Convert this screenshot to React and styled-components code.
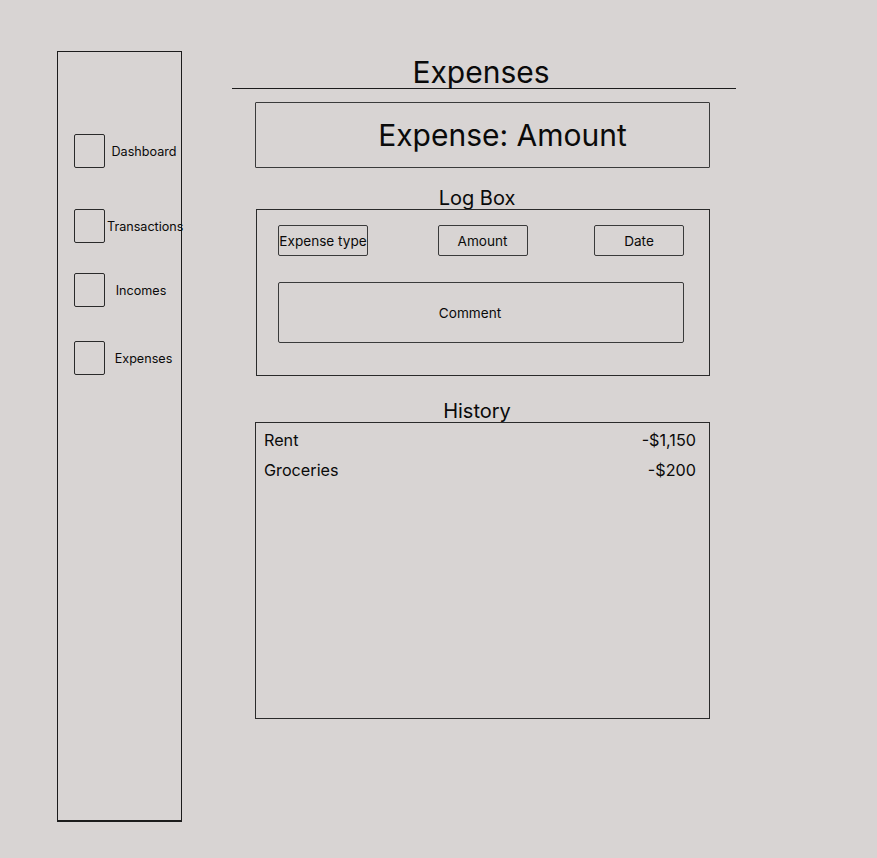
import styled, { createGlobalStyle } from 'styled-components'

const GlobalStyle = createGlobalStyle`
  html, body {
    margin: 0;
    padding: 0;
    background: #d8d4d3;
  }
  body {
    font-family: Inter, "Noto Sans", "Liberation Sans", sans-serif;
    color: #0a0a0a;
  }
`

const Page = styled.div`
  display: flex;
  align-items: flex-start;
  min-height: 858px;
  padding: 51px 0 0 57px;
  box-sizing: border-box;
`

const Sidebar = styled.nav`
  width: 125px;
  height: 771px;
  border: 1.5px solid #1c1c1c;
  border-bottom-width: 2px;
  box-sizing: border-box;
  padding-top: 82px;
  display: flex;
  flex-direction: column;
`

const NavItem = styled.div`
  display: flex;
  align-items: center;
  margin-top: ${p => p.gap || 0}px;
  padding-left: 16px;
`

const NavIcon = styled.div`
  width: 31px;
  height: 34px;
  flex-shrink: 0;
  border: 1.5px solid #2a2a2a;
  border-radius: 2px;
  box-sizing: border-box;
`

const NavLabel = styled.span`
  flex: 1;
  text-align: center;
  font-size: 12.6px;
  white-space: nowrap;
  margin-left: ${p => p.shift || 0}px;
`

const Main = styled.main`
  width: 504px;
  margin-left: 50px;
  display: flex;
  flex-direction: column;
`

const Title = styled.h1`
  margin: 6px 0 0;
  padding-right: 6px;
  font-size: 30px;
  font-weight: 400;
  line-height: 31px;
  text-align: center;
  border-bottom: 1px solid #1c1c1c;
`

const Column = styled.div`
  width: 455px;
  margin-left: 23px;
  display: flex;
  flex-direction: column;
`

const AmountCard = styled.div`
  margin-top: 13px;
  height: 66px;
  border: 1.5px solid #3a3a3a;
  border-radius: 1px;
  box-sizing: border-box;
  display: flex;
  align-items: center;
  justify-content: center;
  padding-left: 40px;
  font-size: 30px;
`

const SectionHeading = styled.h2`
  margin: ${p => p.top}px 0 0;
  font-size: 20px;
  font-weight: 400;
  line-height: 22px;
  text-align: center;
  padding-right: 11px;
`

const LogBox = styled.div`
  margin-left: 1px;
  height: 167px;
  border: 1.5px solid #2a2a2a;
  box-sizing: border-box;
  padding: 15px 25px 0 21px;
  display: flex;
  flex-direction: column;
  gap: 26px;
`

const FieldRow = styled.div`
  display: flex;
  justify-content: space-between;
`

const Field = styled.div`
  width: ${p => p.wide ? '100%' : '90px'};
  height: ${p => p.wide ? 61 : 31}px;
  border: 1.5px solid #3a3a3a;
  border-radius: 2px;
  box-sizing: border-box;
  display: flex;
  align-items: center;
  justify-content: center;
  font-size: 13.6px;
  white-space: nowrap;
  padding-right: ${p => p.wide ? 22 : 0}px;
  margin-left: ${p => p.nudge || 0}px;
`

const HistoryBox = styled.div`
  height: 297px;
  border: 1.5px solid #2a2a2a;
  box-sizing: border-box;
  padding: 2px 13px 0 8px;
`

const HistoryRow = styled.div`
  display: flex;
  justify-content: space-between;
  font-size: 16.2px;
  line-height: 30px;
`

const navItems = [
  { label: 'Dashboard', gap: 0, shift: 2 },
  { label: 'Transactions', gap: 41, shift: 2 },
  { label: 'Incomes', gap: 30, shift: -4 },
  { label: 'Expenses', gap: 34, shift: 1 },
]

const history = [
  { name: 'Rent', amount: '-$1,150' },
  { name: 'Groceries', amount: '-$200' },
]

export default function App() {
  return (
    <>
      <GlobalStyle />
      <Page>
        <Sidebar>
          {navItems.map(item => (
            <NavItem key={item.label} gap={item.gap}>
              <NavIcon />
              <NavLabel shift={item.shift}>{item.label}</NavLabel>
            </NavItem>
          ))}
        </Sidebar>
        <Main>
          <Title>Expenses</Title>
          <Column>
            <AmountCard>Expense: Amount</AmountCard>
            <SectionHeading top={19}>Log Box</SectionHeading>
            <LogBox>
              <FieldRow>
                <Field>Expense type</Field>
                <Field nudge={3}>Amount</Field>
                <Field>Date</Field>
              </FieldRow>
              <Field wide>Comment</Field>
            </LogBox>
            <SectionHeading top={24}>History</SectionHeading>
            <HistoryBox>
              {history.map(h => (
                <HistoryRow key={h.name}>
                  <span>{h.name}</span>
                  <span>{h.amount}</span>
                </HistoryRow>
              ))}
            </HistoryBox>
          </Column>
        </Main>
      </Page>
    </>
  )
}
